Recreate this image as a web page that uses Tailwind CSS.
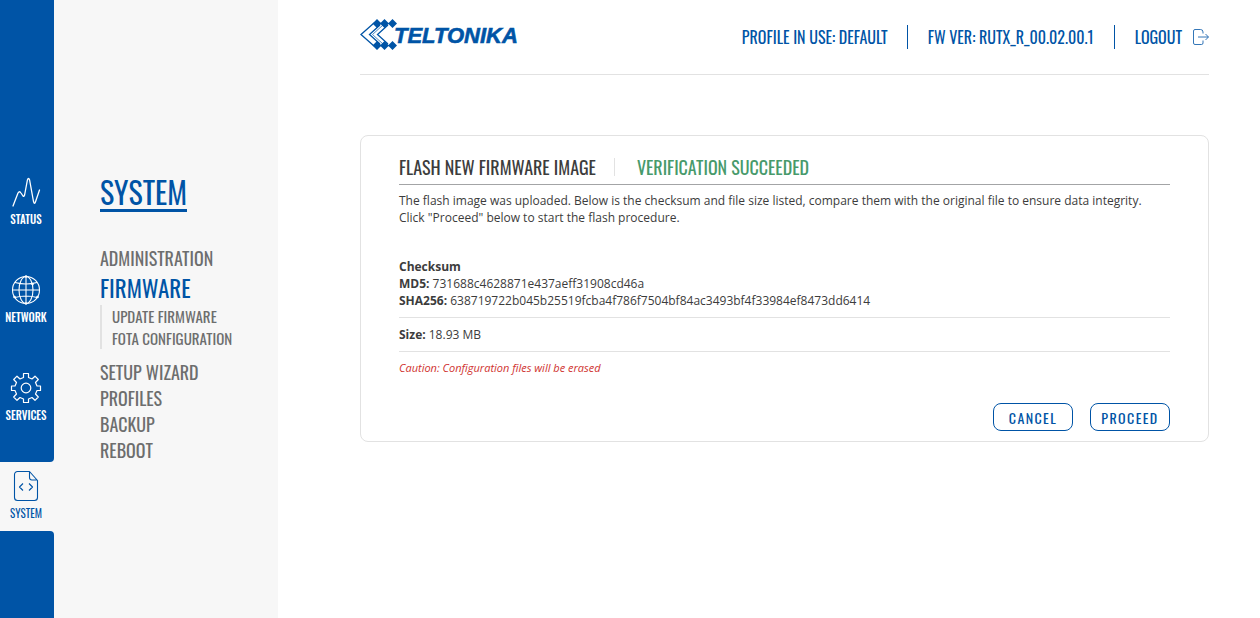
<!doctype html>
<html lang="en">
<head>
  <meta charset="UTF-8">
  <meta name="viewport" content="width=device-width, initial-scale=1.0">
  <title>Firmware - Teltonika</title>
  <script src="https://cdn.jsdelivr.net/npm/@tailwindcss/browser@4"></script>
</head>
<body class="bg-white text-[#3c3c3c] font-['Open_Sans',sans-serif]">
<div class="flex min-h-screen">

  <!-- main menu -->
  <nav class="flex flex-col w-[54px] shrink-0 bg-[#f7f7f7] text-white text-[11px] leading-4 font-medium font-['Oswald','Liberation_Sans_Narrow','Roboto_Condensed',sans-serif]">
    <div class="flex flex-col gap-[47px] bg-[#0054a6] rounded-br pt-[176px] pb-[39px] pr-[2px]">
      <a href="#" class="flex flex-col items-center gap-[3px]">
        <svg class="size-8" viewBox="0 0 32 32" fill="none" stroke="currentColor" stroke-width="1.3" stroke-linecap="round" stroke-linejoin="round">
          <path d="M3 30 L8 17 Q9.5 14.5 11 17 L13 20 Q14 21 14.6 19 L17.4 4 Q18.5 1 19.6 4 L23.5 25.500 Q24.500 29 25.600 25.500 L29.500 14"/>
        </svg>
        STATUS
      </a>
      <a href="#" class="flex flex-col items-center gap-[3px]">
        <svg class="size-8" viewBox="0 0 32 32" fill="none" stroke="currentColor" stroke-width="1.1">
          <circle cx="16" cy="16" r="13.500"/>
          <ellipse cx="16" cy="16" rx="7" ry="13.500"/>
          <path d="M16 2.500v27M2.500 16h27M5 8.500q11 3 22 0M5 23.500q11-3 22 0"/>
          <g fill="currentColor" stroke="none"><circle cx="16" cy="2.500" r="1.300"/><circle cx="22.500" cy="10" r="1.300"/><circle cx="4.500" cy="23" r="1.300"/><circle cx="16" cy="29.500" r="1.300"/><circle cx="27.500" cy="23" r="1.300"/></g>
        </svg>
        NETWORK
      </a>
      <a href="#" class="flex flex-col items-center gap-[3px]">
        <svg class="size-8" viewBox="0 0 32 32" fill="none" stroke="currentColor" stroke-width="1.2" stroke-linejoin="round">
          <circle cx="16" cy="16" r="4.800"/>
          <path d="M13.500 1.500h5v4l3.500 1.500 3-2.800 3.300 3.300-2.800 3 1.500 3.500h3.500v4.500h-3.500l-1.500 3.500 2.800 3-3.300 3.300-3-2.800-3.500 1.500v3.500h-5v-3.500l-3.500-1.500-3 2.800-3.300-3.300 2.800-3-1.500-3.500h-3.500v-4.500h3.500l1.500-3.500-2.800-3 3.300-3.300 3 2.800 3.500-1.500z"/>
        </svg>
        SERVICES
      </a>
    </div>
    <a href="#" class="flex flex-col items-center gap-[3px] h-[69px] pt-2 pr-[2px] text-[#0054a6] font-normal">
      <svg class="size-8" viewBox="0 0 32 32" fill="none" stroke="currentColor" stroke-width="1.100" stroke-linejoin="round">
        <path d="M19.500 1.500H7.500a3 3 0 0 0-3 3v23a3 3 0 0 0 3 3h17a3 3 0 0 0 3-3v-17zM19.500 1.500v6a2.500 2.500 0 0 0 2.500 2.500h5.500"/>
        <path d="M13 13.500l-3.500 3.500 3.500 3.500M19 13.500l3.500 3.500-3.500 3.500"/>
      </svg>
      SYSTEM
    </a>
    <div class="grow bg-[#0054a6] rounded-tr"></div>
  </nav>

  <!-- submenu -->
  <aside class="w-[224px] shrink-0 bg-[#f7f7f7] pl-[46px] pt-[175px] text-[#6d6e6e] font-['Oswald','Liberation_Sans_Narrow','Roboto_Condensed',sans-serif]">
    <h1 class="inline-block border-b-[3px] border-[#0054a6] text-[#0054a6] text-[30px] leading-[34px]">SYSTEM</h1>
    <ul class="pt-[33px] text-lg leading-[26px]">
      <li><a href="#">ADMINISTRATION</a></li>
      <li>
        <a href="#" class="block text-[#0054a6] text-[23px] leading-[34px]">FIRMWARE</a>
        <ul class="border-l-2 border-[#e2e2e2] pl-[10px] mb-[10px] text-[15px] leading-[22px]">
          <li><a href="#">UPDATE FIRMWARE</a></li>
          <li><a href="#">FOTA CONFIGURATION</a></li>
        </ul>
      </li>
      <li><a href="#">SETUP WIZARD</a></li>
      <li><a href="#">PROFILES</a></li>
      <li><a href="#">BACKUP</a></li>
      <li><a href="#">REBOOT</a></li>
    </ul>
  </aside>

  <main class="grow min-w-0 pl-[82px] pr-[51px]">
    <header class="flex items-start justify-between h-[75px] border-b border-[#e2e2e2] text-[#0054a6]">
      <a href="#" class="mt-4" aria-label="Teltonika">
        <svg class="w-[160px] h-9" viewBox="0 0 160 36">
          <g fill="none" stroke="#0054a6" stroke-width="1.300">
            <path d="M14 7L1 18.500L14 30"/>
            <path d="M20 9L9.500 18.500L20 28"/>
            <path d="M23 9L12.500 18.500L23 28" stroke-width="0.700"/>
            <path d="M28 9L17.500 18.500L28 28"/>
          </g>
          <path fill="#0054a6" d="M17 3l4.500 4.500L17 12l-4.500-4.500zM24.500 3l4.500 4.500L24.500 12l-4.500-4.500zM32.500 3l4.500 4.500L32.500 12l-4.500-4.500zM17 25l4.500 4.500L17 34l-4.500-4.500zM24.500 25l4.500 4.500L24.500 34l-4.500-4.500zM32.500 25l4.500 4.500L32.500 34l-4.500-4.500z"/>
          <text x="34" y="27" fill="#0054a6" stroke="#0054a6" stroke-width="0.600" class="text-[22px] font-bold italic font-['Liberation_Sans',sans-serif]">TELTONIKA</text>
        </svg>
      </a>
      <div class="flex items-center mt-[25px] text-base leading-6 font-['Oswald','Liberation_Sans_Narrow','Roboto_Condensed',sans-serif]">
        <span class="pr-[19px]">PROFILE IN USE: DEFAULT</span>
        <span class="border-l border-[#0054a6] px-5">FW VER: RUTX_R_00.02.00.1</span>
        <a href="#" class="flex items-center gap-[11px] border-l border-[#0054a6] pl-5">
          LOGOUT
          <svg class="size-4" viewBox="0 0 16 16" fill="none" stroke="currentColor" stroke-width="0.800">
            <path d="M10 4.500V3Q10 .5 7.500.5H2Q.5.5.5 2V14Q.5 15.500 2 15.500H8.500Q10 15.500 10 14V11.500"/>
            <path d="M5 8H15.300M12.500 5L15.500 8L12.500 11"/>
          </svg>
        </a>
      </div>
    </header>

    <section class="mt-[60px] border border-[#e2e2e2] rounded-lg px-[38px] pt-[18px] pb-[10px] text-xs leading-[17px]">
      <div class="flex items-center h-[31px] pb-1 border-b border-[#a3a4a6] text-lg leading-[18px] font-['Oswald','Liberation_Sans_Narrow','Roboto_Condensed',sans-serif]">
        <h2 class="pr-[18px]">FLASH NEW FIRMWARE IMAGE</h2>
        <span class="border-l border-[#e2e2e2] pl-[22px] text-[#479a6b]">VERIFICATION SUCCEEDED</span>
      </div>
      <p class="pt-[7px]">The flash image was uploaded. Below is the checksum and file size listed, compare them with the original file to ensure data integrity.<br>Click "Proceed" below to start the flash procedure.</p>
      <div class="mt-8 pb-2 border-b border-[#e2e2e2]">
        <p><b>Checksum</b></p>
        <p><b>MD5:</b> 731688c4628871e437aeff31908cd46a</p>
        <p><b>SHA256:</b> 638719722b045b25519fcba4f786f7504bf84ac3493bf4f33984ef8473dd6414</p>
      </div>
      <p class="py-2 border-b border-[#e2e2e2]"><b>Size:</b> 18.93 MB</p>
      <p class="pt-[7px] text-[11px] italic text-[#d0332f]">Caution: Configuration files will be erased</p>
      <div class="flex justify-end gap-[17px] mt-[27px] text-[#0054a6] font-['Oswald','Liberation_Sans_Narrow','Roboto_Condensed',sans-serif]">
        <button type="button" class="w-20 h-7 border border-[#0054a6] rounded-lg pt-[2px] text-sm leading-5 tracking-widest">CANCEL</button>
        <button type="button" class="w-20 h-7 border border-[#0054a6] rounded-lg pt-[2px] text-sm leading-5 tracking-widest">PROCEED</button>
      </div>
    </section>
  </main>
</div>
</body>
</html>
